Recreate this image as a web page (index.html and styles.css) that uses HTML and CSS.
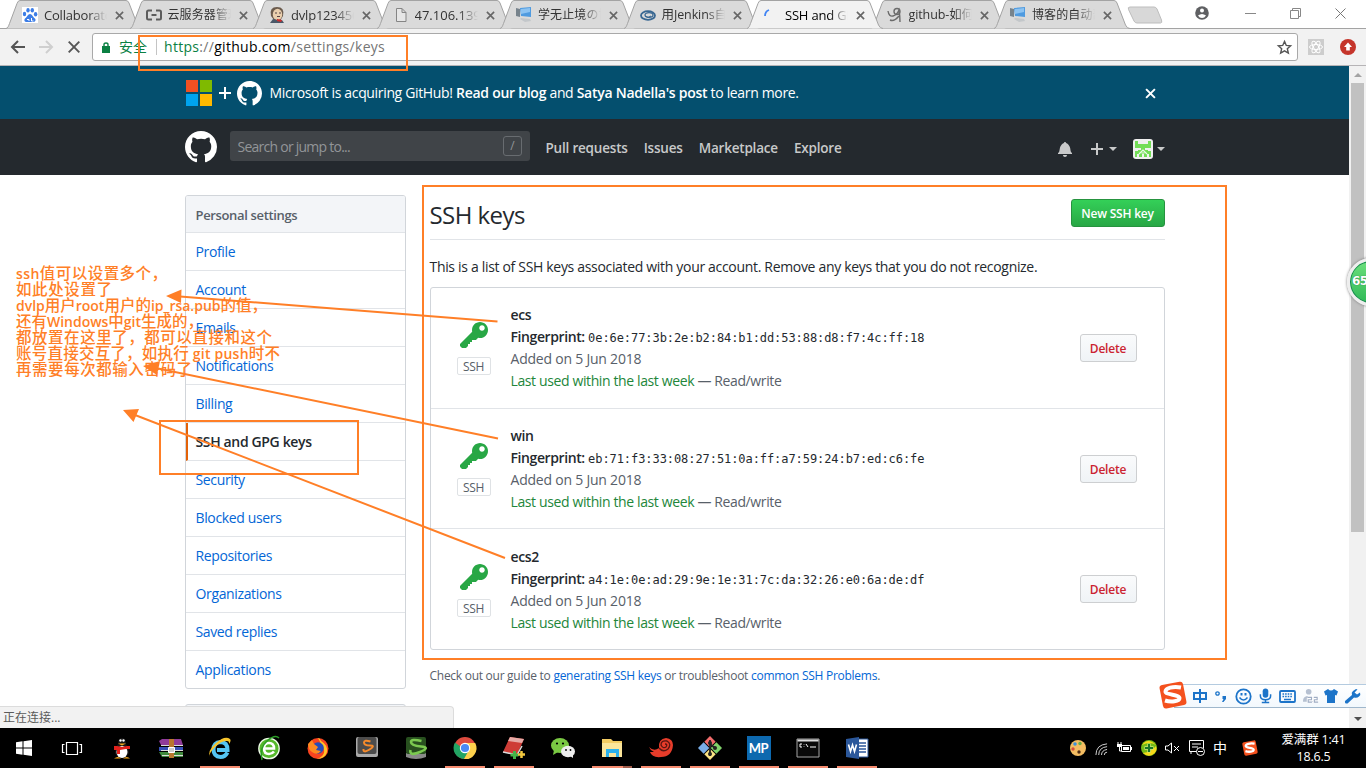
FILE: index.html
```html
<!DOCTYPE html>
<html lang="zh-CN">
<head>
<meta charset="utf-8">
<title>SSH and GPG keys</title>
<link rel="stylesheet" href="styles.css">
</head>
<body>
<svg class="defs" width="0" height="0">
  <symbol id="tab" viewBox="0 0 137 29"><path d="M0 28.500C2 28 2.500 26 3.500 23.500L11 3.500Q12 .5 14 .5H120Q122 .5 123 3L131.500 25Q133 28.500 136 28.500" stroke="#a3a3a3"/></symbol>
  <symbol id="x" viewBox="0 0 10 10"><path d="M1 1l8 8M9 1L1 9" stroke="currentColor" stroke-width="1.8" fill="none"/></symbol>
  <symbol id="mark" viewBox="0 0 16 16"><path fill="#fff" fill-rule="evenodd" d="M8 0C3.58 0 0 3.58 0 8c0 3.54 2.29 6.53 5.47 7.59.4.07.55-.17.55-.38 0-.19-.01-.82-.01-1.49-2.01.37-2.53-.49-2.69-.94-.09-.23-.48-.94-.82-1.13-.28-.15-.68-.52-.01-.53.63-.01 1.08.58 1.23.82.72 1.21 1.87.87 2.33.66.07-.52.28-.87.51-1.07-1.78-.2-3.64-.89-3.64-3.95 0-.87.31-1.59.82-2.15-.08-.2-.36-1.02.08-2.12 0 0 .67-.21 2.2.82.64-.18 1.32-.27 2-.27.68 0 1.36.09 2 .27 1.53-1.04 2.2-.82 2.2-.82.44 1.1.16 1.92.08 2.12.51.56.82 1.27.82 2.15 0 3.07-1.87 3.75-3.65 3.95.29.25.54.73.54 1.48 0 1.07-.01 1.93-.01 2.2 0 .21.15.46.55.38A8.013 8.013 0 0 0 16 8c0-4.42-3.58-8-8-8z"/></symbol>
  <symbol id="key" viewBox="0 0 14 16"><path fill="#28a745" fill-rule="evenodd" d="M12.83 2.17C12.08 1.42 11.14 1.03 10 1c-1.13.03-2.08.42-2.83 1.17S6.04 3.86 6.01 5c0 .3.03.59.09.89L0 12v1l1 1h2l1-1v-1h1v-1h1v-1h2l1.09-1.11c.3.08.59.11.91.11 1.14-.03 2.08-.42 2.83-1.17S13.97 6.14 14 5c-.03-1.14-.42-2.08-1.17-2.83zM11 5.38c-.77 0-1.38-.61-1.38-1.38 0-.77.61-1.38 1.38-1.38.77 0 1.38.61 1.38 1.38 0 .77-.61 1.38-1.38 1.38z"/></symbol>
  <symbol id="pc" viewBox="0 0 16 16"><path d="M0 1l4 1v8l-4-1z" fill="#77838c"/><path d="M4 1l11-1v10L5 9z" fill="#4f9be0"/><path d="M5 2l9-1v4L5 7z" fill="#8cc3f2"/><path d="M5 11l9 1 1 2-6 1-5-3z" fill="#c3c7ca"/></symbol>
  <symbol id="sogou" viewBox="0 0 28 28"><path d="M3 4Q0 4.500 .6 7.500L4 25q.7 3 3.500 2.500L25 24q3-.7 2.400-3.500L24 3Q23 0 20.500.8Z" fill="#f4511e"/><path d="M22 6.500C14 5 6.500 7 6.500 10.500S20.500 13.500 20.500 17 12 21.500 6 19.500" fill="none" stroke="#fff" stroke-width="4"/></symbol>
</svg>

<div class="screen">
  <header class="tabstrip">
    <div class="tab"><svg class="shape"><use href="#tab"/></svg>
      <svg class="fav" viewBox="0 0 16 16"><path fill="#fff" d="M0 0h16v16H0z"/><g fill="#3c7de6"><ellipse cx="2.500" cy="7" rx="1.700" ry="2.300"/><ellipse cx="6" cy="3.200" rx="1.700" ry="2.300"/><ellipse cx="10.300" cy="3.200" rx="1.700" ry="2.300"/><ellipse cx="13.600" cy="7.200" rx="1.700" ry="2.200"/><path d="M8 7c2 0 3 3 5 4.500 1.500 2-.5 4-2.500 3.500H5.500C3 15.500 1.500 13.500 3 11.500 5 10 6 7 8 7z"/></g><path d="M5 12.500h2v1.500M9.500 11v3h2" stroke="#fff" fill="none"/></svg>
      <span class="title">Collaborators</span><svg class="close"><use href="#x"/></svg></div>
    <div class="tab"><svg class="shape"><use href="#tab"/></svg>
      <svg class="fav" viewBox="0 0 16 16"><path d="M6 3.500H2.500Q1 3.500 1 5v6q0 1.500 1.500 1.500H6M10 3.500h3.500Q15 3.500 15 5v6q0 1.500-1.500 1.500H10M5.500 8h5" stroke="#5c5c5c" stroke-width="2" fill="none"/></svg>
      <span class="title zh">云服务器管理</span><svg class="close"><use href="#x"/></svg></div>
    <div class="tab"><svg class="shape"><use href="#tab"/></svg>
      <svg class="fav" viewBox="0 0 16 16"><path d="M2 9Q0 0 8 0t6 9l-3 5-6-1z" fill="#6b5b4d"/><ellipse cx="8.500" cy="7.500" rx="4.700" ry="5.800" fill="#eacfae"/><path d="M1 16l3-4 5 1 4 0 2 3z" fill="#4a5868"/><path d="M8 12l5 1-1 2-4-1z" fill="#d02b2b"/><path d="M6 6h2m2 0h2M8 9.500h3" stroke="#544"/></svg>
      <span class="title">dvlp12345678</span><svg class="close"><use href="#x"/></svg></div>
    <div class="tab"><svg class="shape"><use href="#tab"/></svg>
      <svg class="fav" viewBox="0 0 16 16"><path d="M3.500 1.500H9l4 4v9H3.500zM9 1.500v4h4" fill="#e6e6e6" stroke="#858585"/></svg>
      <span class="title ip">47.106.139.12</span><svg class="close"><use href="#x"/></svg></div>
    <div class="tab"><svg class="shape"><use href="#tab"/></svg><svg class="fav"><use href="#pc"/></svg>
      <span class="title zh">学无止境の博客</span><svg class="close"><use href="#x"/></svg></div>
    <div class="tab"><svg class="shape"><use href="#tab"/></svg>
      <svg class="fav" viewBox="0 0 16 16"><g fill="none" stroke="#386792"><ellipse cx="8" cy="8.500" rx="7" ry="4.300" stroke-width="1.800"/><ellipse cx="9" cy="8" rx="4" ry="2.300" stroke-width="1.300"/><path d="M5 9q3 3 6 0" /></g></svg>
      <span class="title mix">用Jenkins自动化</span><svg class="close"><use href="#x"/></svg></div>
    <div class="tab active"><svg class="shape"><use href="#tab"/></svg>
      <svg class="fav" viewBox="0 0 16 16"><path d="M2 9q0-4.500 4-6" fill="none" stroke="#4285f4" stroke-width="1.800"/></svg>
      <span class="title">SSH and GPG</span><svg class="close"><use href="#x"/></svg></div>
    <div class="tab"><svg class="shape"><use href="#tab"/></svg>
      <svg class="fav" viewBox="0 0 16 16"><g fill="none" stroke="#6b6b6b" stroke-width="1.400"><circle cx="10" cy="4.500" r="3"/><path d="M1 4q1 6 5 5 4-1 6-6 1 6 1 12M3 13q4 2 9-4"/></g></svg>
      <span class="title mix">github-如何用</span><svg class="close"><use href="#x"/></svg></div>
    <div class="tab"><svg class="shape"><use href="#tab"/></svg><svg class="fav"><use href="#pc"/></svg>
      <span class="title zh">博客的自动部署</span><svg class="close"><use href="#x"/></svg></div>
    <svg class="newtab" viewBox="0 0 36 18"><path d="M3 1h24q2 0 3 2l4.500 11q1 3-1 3H10q-2 0-3-2L1.500 3.500Q.5 1 3 1z" fill="#d8d8d8" stroke="#bdbdbd"/></svg>
    <div class="winctl">
      <svg width="14" height="14" viewBox="0 0 14 14"><circle cx="7" cy="7" r="6.800" fill="#5f6063"/><circle cx="7" cy="4.600" r="2" fill="#fff"/><path d="M3 9.500q4-3 8 0-1.500 2.500-4 2.500T3 9.500z" fill="#fff"/></svg>
      <svg width="11" height="11" viewBox="0 0 11 11"><path d="M0 5.500h11" stroke="#888"/></svg>
      <svg width="11" height="11" viewBox="0 0 11 11"><path d="M.5 2.500h8v8h-8zM2.500 2.500v-2h8v8h-2" fill="none" stroke="#888"/></svg>
      <svg width="11" height="11" viewBox="0 0 11 11"><path d="M.5.5l10 10M10.500.5l-10 10" stroke="#777"/></svg>
    </div>
  </header>

  <nav class="toolbar">
    <svg width="14" height="14" viewBox="0 0 14 14"><path d="M14 7H1.500M7 1L1 7l6 6" fill="none" stroke="#555" stroke-width="2"/></svg>
    <svg width="14" height="14" viewBox="0 0 14 14"><path d="M0 7h12.500M7 1l6 6-6 6" fill="none" stroke="#cfcfcf" stroke-width="2"/></svg>
    <svg width="12" height="12" viewBox="0 0 12 12"><path d="M.7.7l10.600 10.600M11.300.7L.7 11.300" fill="none" stroke="#555" stroke-width="1.900"/></svg>
    <div class="address">
      <svg width="8" height="11" viewBox="0 0 8 11"><path d="M0 4h8v7H0z" fill="#0b8043"/><path d="M2 5V2.500Q2 1 4 1t2 1.500V5" fill="none" stroke="#0b8043" stroke-width="1.400"/></svg>
      <span class="secure">安全</span><i class="sep"></i>
      <span class="url"><b>https</b>://<em>github.com</em>/settings/keys</span>
      <svg class="star" width="15" height="15" viewBox="0 0 16 16"><path d="M8 1.500l1.900 4.300 4.600.4-3.500 3.100 1.100 4.600L8 11.500l-4.100 2.400L5 9.300 1.500 6.200l4.600-.4z" fill="none" stroke="#555" stroke-width="1.500"/></svg>
    </div>
    <svg class="ext" width="16" height="16" viewBox="0 0 16 16"><path fill="#cdcdcd" d="M0 0h16v16H0z"/><g fill="none" stroke="#fff"><ellipse cx="8" cy="8" rx="6.500" ry="2.500"/><ellipse cx="8" cy="8" rx="6.500" ry="2.500" transform="rotate(60 8 8)"/><ellipse cx="8" cy="8" rx="6.500" ry="2.500" transform="rotate(120 8 8)"/></g></svg>
    <svg class="ext2" width="16" height="16" viewBox="0 0 16 16"><circle cx="8" cy="8" r="8" fill="#c5352b"/><path d="M8 3.500L12 8H9.800v3.500H6.200V8H4z" fill="#fff"/></svg>
  </nav>

  <div class="viewport">
    <div class="page">
      <div class="banner"><div class="wrap">
        <svg width="26" height="26" viewBox="0 0 26 26"><path fill="#f25022" d="M0 0h12v12H0z"/><path fill="#7fba00" d="M14 0h12v12H14z"/><path fill="#00a4ef" d="M0 14h12v12H0z"/><path fill="#ffb900" d="M14 14h12v12H14z"/></svg>
        <svg class="plus" width="12" height="12" viewBox="0 0 12 12"><path d="M6 0v12M0 6h12" stroke="#fff" stroke-width="2"/></svg>
        <svg width="25" height="25"><use href="#mark"/></svg>
        <p>Microsoft is acquiring GitHub! <b>Read our blog</b> and <b>Satya Nadella's post</b> to learn more.</p>
        <svg class="dismiss" width="11" height="11"><use href="#x"/></svg>
      </div></div>
      <div class="ghheader"><div class="wrap">
        <svg width="32" height="32"><use href="#mark"/></svg>
        <div class="search"><span>Search or jump to...</span><kbd>/</kbd></div>
        <a>Pull requests</a><a>Issues</a><a>Marketplace</a><a>Explore</a>
        <div class="user">
          <svg width="14" height="16" viewBox="0 0 14 16"><path fill="#c8c9ca" d="M14 12v1H0v-1l.73-.58c.77-.77.81-2.55 1.19-4.42C2.69 3.23 6 2 6 2c0-.55.45-1 1-1s1 .45 1 1c0 0 3.39 1.230 4.160 5 .38 1.880.42 3.660 1.190 4.420l.66.58H14zm-7 4c1.110 0 2-.89 2-2H5c0 1.110.89 2 2 2z"/></svg>
          <svg class="add" width="12" height="12" viewBox="0 0 12 12"><path d="M6 0v12M0 6h12" stroke="#c8c9ca" stroke-width="2"/></svg><i class="caret"></i>
          <svg class="avatar" width="20" height="20" viewBox="0 0 20 20"><rect width="20" height="20" rx="3" fill="#f0f0f0"/><path fill="#73dd57" d="M2 2h3v3h10V2h3v7h-6v2h3v1h3v6h-2v-3h-2v3h-3v-3h-2v3H6v-3H4v3H2v-6h3v-1h3V9H2z"/><path d="M6 15l4-4 4 4M8.500 14l3 0" stroke="#eafae6" stroke-width="1.200" fill="none"/></svg><i class="caret"></i>
        </div>
      </div></div>

      <div class="wrap content">
        <aside>
          <div class="menu">
            <h3>Personal settings</h3>
            <a>Profile</a><a>Account</a><a>Emails</a><a>Notifications</a><a>Billing</a><a class="selected">SSH and GPG keys</a><a>Security</a><a>Blocked users</a><a>Repositories</a><a>Organizations</a><a>Saved replies</a><a>Applications</a>
          </div>
          <div class="menu next"></div>
        </aside>
        <main>
          <div class="subhead"><h2>SSH keys</h2><button class="new">New SSH key</button></div>
          <p class="intro">This is a list of SSH keys associated with your account. Remove any keys that you do not recognize.</p>
          <ul class="keys">
            <li><div class="kicon"><svg width="28" height="32"><use href="#key"/></svg><span>SSH</span></div>
              <div class="info"><b>ecs</b><p><b>Fingerprint:</b> <code>0e:6e:77:3b:2e:b2:84:b1:dd:53:88:d8:f7:4c:ff:18</code></p><p class="gray">Added on 5 Jun 2018</p><p class="gray"><em>Last used within the last week</em> — Read/write</p></div><button class="del">Delete</button></li>
            <li><div class="kicon"><svg width="28" height="32"><use href="#key"/></svg><span>SSH</span></div>
              <div class="info"><b>win</b><p><b>Fingerprint:</b> <code>eb:71:f3:33:08:27:51:0a:ff:a7:59:24:b7:ed:c6:fe</code></p><p class="gray">Added on 5 Jun 2018</p><p class="gray"><em>Last used within the last week</em> — Read/write</p></div><button class="del">Delete</button></li>
            <li><div class="kicon"><svg width="28" height="32"><use href="#key"/></svg><span>SSH</span></div>
              <div class="info"><b>ecs2</b><p><b>Fingerprint:</b> <code>a4:1e:0e:ad:29:9e:1e:31:7c:da:32:26:e0:6a:de:df</code></p><p class="gray">Added on 5 Jun 2018</p><p class="gray"><em>Last used within the last week</em> — Read/write</p></div><button class="del">Delete</button></li>
          </ul>
          <p class="guide">Check out our guide to <a>generating SSH keys</a> or troubleshoot <a>common SSH Problems</a>.</p>
        </main>
      </div>
    </div>
    <div class="scrollbar"><i class="up"></i><div class="thumb"></div><i class="down"></i></div>
  </div>

  <footer class="taskbar">
    <div class="app first"><svg viewBox="0 0 24 24"><path fill="#fff" d="M4 6.300l6.500-1v6.200H4zm7.500-1.100L20 4v7.500h-8.500zM4 12.500h6.500v6.200L4 17.700zm7.500 0H20V20l-8.500-1.200z"/></svg></div>
    <div class="app second"><svg viewBox="0 0 24 24"><path d="M6.500 6.500h11v12h-11zM4.500 8.500h-2v8h2M19.500 8.500h2v8h-2" fill="none" stroke="#fff" stroke-width="1.200"/></svg></div>
    <div class="app"><svg viewBox="0 0 24 24"><path d="M8 8q0-6 4-6t4 6q3 4 3 9-2 5-7 5t-7-5q0-5 3-9z" fill="#161616"/><ellipse cx="12" cy="16" rx="5.500" ry="6" fill="#fff"/><circle cx="10.500" cy="4.500" r="1.200" fill="#fff"/><circle cx="13.500" cy="4.500" r="1.200" fill="#fff"/><path d="M4 10h3l5 1 5-1h3v3l-4 0-6 1v4H7v-4H4z" fill="#e3211c"/><path d="M8 7.500h8l-4 2zM4 22.500q4-3 7 0zM13 22.500q4-3 7 0z" fill="#f6a81a"/></svg></div>
    <div class="app"><svg viewBox="0 0 24 24"><path fill="#8f3b99" d="M0 5l3-2h19l2 6H2z"/><path fill="#3650b8" d="M0 11h24v4H0z"/><path fill="#3f8a3c" d="M0 16h24v5H3z"/><path d="M2 9.500h22M2 14.500h22M3 19.500h21" stroke="#ddd"/><path fill="#b9772f" d="M10 3h5v19h-5z"/><path d="M9.500 11.500h6v5h-6z" fill="#ccc" stroke="#fff"/></svg></div>
    <div class="app open"><svg viewBox="0 0 24 24"><path d="M19.500 16.500q-2.500 4.500-7 4.500-7-.5-7-7.500T12.500 6q7 0 7 8H9" fill="none" stroke="#55c5f3" stroke-width="4"/><path d="M2 21Q-1 15 8 7T22 3q1.500 1.500-1 5 .5-3-2-3Q14 4 7 11T2 21z" fill="#f8c52c"/></svg></div>
    <div class="app"><svg viewBox="0 0 24 24"><circle cx="12" cy="12.500" r="10.200" fill="#56b82c" stroke="#eefbe8" stroke-width="1.300"/><path d="M17 15.500q-2 2.500-5 2.500-5 0-5-5.500T12 7q5 0 5 5.500H8" fill="none" stroke="#fff" stroke-width="2.600"/><path d="M5 24Q2 12 10 5t12-3" stroke="#2a9d25" fill="none" stroke-width="1.500"/></svg></div>
    <div class="app"><svg viewBox="0 0 24 24"><circle cx="12" cy="12.500" r="10.500" fill="#f8431f"/><path d="M12 2q2 0 3 3 7 4 6 11-2 7-10 7 10-4 6-12-3-5-5-9z" fill="#ffc527"/><circle cx="12" cy="12" r="5.800" fill="#274cb8"/><path d="M2 8l4-4 2 4 4 3-2 3 5 1q-4 5-9 1-4-3-4-8z" fill="#ff8a1f"/></svg></div>
    <div class="app"><svg viewBox="0 0 24 24"><rect x="1" y="1" width="22" height="20" rx="2" fill="#aaa"/><rect x="2.500" y="1" width="19" height="17" rx="2" fill="#4c4c4c"/><path d="M15.500 5.500Q9 3.500 9 6.500t6 3-.5 4-6-.5" fill="none" stroke="#f78b2b" stroke-width="2"/></svg></div>
    <div class="app"><svg viewBox="0 0 24 24"><path d="M2 17h20v4q-10 4-20 0z" fill="#898989"/><rect x="2" y="1" width="20" height="17" rx="2" fill="#28501f"/><path d="M17.500 5Q7 2.500 7 6t10 4.500-1 5.500-9.500-2" fill="none" stroke="#7bc950" stroke-width="2.600"/></svg></div>
    <div class="app open"><svg viewBox="0 0 24 24"><circle cx="12" cy="12" r="11" fill="#de4b3f"/><path d="M12 12l-4-1-6-4.500A11 11 0 0 0 11 23l5-8z" fill="#22a463"/><path d="M12 7h10.200A11 11 0 0 1 11 23l5-9z" fill="#fdd14c"/><circle cx="12" cy="12" r="5.200" fill="#fff"/><circle cx="12" cy="12" r="4.100" fill="#4a8af4"/></svg></div>
    <div class="app open"><svg viewBox="0 0 24 24"><path d="M8 1l14 2-7 16-14-3z" fill="#ce3c36"/><path d="M8 1l14 2-2 4L6 5z" fill="#e6aaa6"/><path d="M1 16l14 3 5-9" stroke="#ddd" fill="none" stroke-width="1.500"/><path d="M8.500 19h8M12.500 15v8" stroke="#43b549" stroke-width="3"/><path d="M16 18.500h7M19.500 15v7" stroke="#f3c940" stroke-width="2.500"/></svg></div>
    <div class="app"><svg viewBox="0 0 24 24"><ellipse cx="9" cy="9.500" rx="9" ry="7.500" fill="#7ac943"/><path d="M3 14l-1 5 5-3z" fill="#7ac943"/><ellipse cx="17" cy="15.500" rx="7" ry="5.800" fill="#eee"/><path d="M19 20l3 2v-4z" fill="#eee"/><circle cx="6" cy="7.500" r="1.100"/><circle cx="12" cy="7.500" r="1.100"/><circle cx="15" cy="14" r=".9"/><circle cx="19.500" cy="14" r=".9"/></svg></div>
    <div class="app open folder"><svg viewBox="0 0 24 24"><path d="M2 3h9l2 2h9v16H2z" fill="#f3cc63"/><path d="M2 7h20v14H2z" fill="#fbe59a"/><path d="M6 13h13v8h-3v-4H9v4H6z" fill="#2cb1ec"/></svg></div>
    <div class="app open"><svg viewBox="0 0 24 24"><path d="M0 11q5 5 10 1-1-9 7-10 7 1 7 7-1 12-12 12Q3 22 1 16l4 0Q1 14 0 11z" fill="#e63c2a"/><path d="M10 12q4 5 9 1 4-5-1-8-6-1-6 4 2 4 5 2 2-3-1-3" fill="none" stroke="#551612" stroke-width="1.300"/></svg></div>
    <div class="app open"><svg viewBox="0 0 24 24"><g transform="rotate(45 12 12)"><path d="M3.500 3.500h8v8h-8z" fill="#f26c6c"/><path d="M12.500 3.500h8v8h-8z" fill="#80d36b"/><path d="M3.500 12.500h8v8h-8z" fill="#79aee8"/><path d="M12.500 12.500h8v8h-8z" fill="#fbe384"/></g><path d="M12 4v16M12 8l5 4" stroke="#222" stroke-width="1.800"/><g fill="#222"><circle cx="12" cy="7" r="2"/><circle cx="12" cy="18" r="2"/><circle cx="17" cy="12" r="2"/></g></svg></div>
    <div class="app open"><div class="mp">MP</div></div>
    <div class="app open"><svg viewBox="0 0 24 24"><path d="M1 3h22v18H1z" fill="#090909" stroke="#a5a5a5"/><path d="M1.500 4.500h21" stroke="#ddd" stroke-width="2"/><path d="M6 8H4v3h2M8 8v.5M8 10.500v.5M10 8l2 3M14 11h6" stroke="#fff" fill="none"/></svg></div>
    <div class="app open"><svg viewBox="0 0 24 24"><path d="M12 3h11v18H12z" fill="#fff" stroke="#2b579a"/><path d="M14 7h7M14 10h7M14 13h7M14 16h7" stroke="#2b579a" stroke-width="1.300"/><path d="M1 3l13-2v22L1 21z" fill="#2b579a"/><path d="M3.500 8.500l2 7L7.500 9l2 6.500 2-7" fill="none" stroke="#fff" stroke-width="1.600"/></svg></div>
    <div class="tray">
      <svg width="16" height="16" viewBox="0 0 16 16"><circle cx="8" cy="8" r="8" fill="#f4bd62"/><circle cx="5" cy="4" r="1.800" fill="#3d90d8"/><circle cx="10" cy="3.500" r="1.700" fill="#67ad46"/><circle cx="3" cy="9" r="1.700" fill="#d94c3a"/><circle cx="9" cy="12" r="1.700" fill="#4d2a12"/></svg>
      <svg width="13" height="13" viewBox="0 0 14 14"><g fill="none" stroke="#ddd"><path d="M1 14Q1 3 13 2M4 14q0-8 9-9M7 14q0-5 6-6M10 14q0-3 3-3"/></g></svg>
      <svg width="16" height="14" viewBox="0 0 16 14"><path d="M5.500 4.500h9v6h-9z" fill="none" stroke="#fff"/><path d="M7 6h6v3H7zM15 6h1v3h-1zM1 3h5v3H1z" fill="#fff"/><path d="M2 1v3M5 1v3M3.500 6v4h2" fill="none" stroke="#fff"/></svg>
      <svg width="16" height="16" viewBox="0 0 16 16"><circle cx="8" cy="8" r="8" fill="#72ba16"/><path d="M1 5q6-8 14 0Q9 1 1 5zM2 13q8-1 13-7 2 6-4 9-5 2-9-2z" fill="#f7d91a"/><path d="M8 3.500v9M3.500 8h9" stroke="#cdea7d" stroke-width="3.500"/><path d="M8 4v8M4 8h8" stroke="#187527" stroke-width="2.200"/></svg>
      <svg width="15" height="12" viewBox="0 0 15 12"><path d="M.5 4v4H3l3.500 3V1L3 4zM9 4l5 5M14 4L9 9" fill="none" stroke="#fff"/></svg>
      <svg width="16" height="16" viewBox="0 0 16 16"><path d="M8 11.500H.5V.5h14V8M3 4h9M3 7h6M2 11v3" fill="none" stroke="#fff"/><circle cx="11.500" cy="11.500" r="4" fill="#000" stroke="#fff"/><path d="M9 11.500h5" stroke="#fff"/></svg>
      <span class="ime">中</span>
      <svg class="sg" width="16" height="16"><use href="#sogou"/></svg>
      <div class="clock"><span>爱满群 1:41</span><span>18.6.5</span></div>
    </div>
  </footer>

  <div class="status">正在连接...</div>
  <div class="ball">65</div>
  <div class="imebar">
    <svg class="logo" width="28" height="28"><use href="#sogou"/></svg>
    <svg width="14" height="14" viewBox="0 0 14 14"><path d="M1 4h12v6H1zM7 0v14" fill="none" stroke="#1c74c9" stroke-width="2"/></svg>
    <svg width="14" height="14" viewBox="0 0 14 14"><circle cx="3.500" cy="4.500" r="1.700" fill="none" stroke="#1c74c9" stroke-width="1.300"/><path d="M8.500 7h3.500v3l-2.500 3H8l1.500-3h-1z" fill="#1c74c9"/></svg>
    <svg width="17" height="17" viewBox="0 0 17 17"><circle cx="8.500" cy="8.500" r="7.200" fill="none" stroke="#1c74c9" stroke-width="1.800"/><path d="M4.500 9.500q4 5 8 0" fill="none" stroke="#1c74c9" stroke-width="1.500"/><path d="M5.500 5h2v2.500h-2zM9.500 5h2v2.500h-2z" fill="#1c74c9"/></svg>
    <svg width="13" height="16" viewBox="0 0 14 16"><rect x="4" width="6" height="10" rx="3" fill="#1c74c9"/><path d="M1.500 6v2q0 4 5.500 4t5.500-4V6M7 12v3M3 15h8" fill="none" stroke="#1c74c9" stroke-width="1.600"/></svg>
    <svg width="17" height="13" viewBox="0 0 17 13"><rect x="1" y="1" width="15" height="11" rx="1" fill="none" stroke="#1c74c9" stroke-width="1.800"/><path d="M3.500 4h10M3.500 6.500h10" stroke="#1c74c9" stroke-width="1.500" stroke-dasharray="1.600 1"/><path d="M5 9.500h7" stroke="#1c74c9" stroke-width="1.500"/></svg>
    <svg width="17" height="16" viewBox="0 0 18 16"><circle cx="6" cy="3.500" r="3" fill="#b5c0d1"/><path d="M0 13q0-5 6-5 4 0 5 2v4H0z" fill="#b5c0d1"/><path d="M5 9.500h4v2.500H5.500v2h4M11.500 9.500H15v2.500h-3v2h4" fill="none" stroke="#fff" stroke-width="3"/><path d="M5 9.500h4v2.500H5.500v2.500H9.500M11.500 9.500H15v2.500h-3v2.500h4" fill="none" stroke="#9dacc3" stroke-width="1.200"/></svg>
    <svg class="shirt" width="14" height="14" viewBox="0 0 14 14"><path d="M4 0q3 3 6 0l4 2.500-1.500 4L11 6v8H3V6l-1.500.5L0 2.500z" fill="#1c74c9"/></svg>
    <svg width="15" height="15" viewBox="0 0 15 15"><path d="M11 0L8 2q-2 1.500-1 4L0 12q-.5 3 2.500 2.500L9 8.500q3 1 5-1T15 3.500l-3 2-2.500-2 3-3z" fill="#1c74c9"/></svg>
  </div>

  <svg class="notes" viewBox="0 0 1366 768">
    <g fill="none" stroke="#ff7f27" stroke-width="2"><path d="M139 36h268v34H139zM160 421h198v53H160zM423 186h803v473H423z"/><path d="M497.500 321.500L180 296.500M498 438.500L158 368.500M505 558L135 415"/></g>
    <g fill="#ff7f27"><path d="M166 296l15.500-6.500-.5 13.500zM143 366l17-5-3 14zM123 410l16-1-5.500 13z"/></g>
    <g class="ink">
      <text x="16" y="279" textLength="151"><tspan>ssh</tspan>值可以设置多个，</text>
      <text x="16" y="295" textLength="96">如此处设置了</text>
      <text x="16" y="311" textLength="251"><tspan>dvlp</tspan>用户<tspan>root</tspan>用户的<tspan>ip_rsa.pub</tspan>的值，</text>
      <text x="16" y="327" textLength="187">还有<tspan>Windows</tspan>中<tspan>git</tspan>生成的，</text>
      <text x="16" y="343" textLength="256">都放置在这里了，都可以直接和这个</text>
      <text x="16" y="359" textLength="264">账号直接交互了，如执行<tspan> git push</tspan>时不</text>
      <text x="16" y="375" textLength="176">再需要每次都输入密码了</text>
    </g>
  </svg>
</div>
</body>
</html>
```
FILE: styles.css
```css
* { box-sizing: border-box; }
body { margin: 0; font-family: "Open Sans", "Noto Sans CJK SC", sans-serif; font-size: 14px; letter-spacing: -.32px; color: #24292e; }
svg { display: block; flex: none; overflow: visible; }
p, h2, h3, ul { margin: 0; padding: 0; }
em { font-style: normal; }
b { font-weight: 600; }
.defs { position: absolute; }
.screen { position: relative; width: 1366px; height: 768px; overflow: hidden; display: flex; flex-direction: column; background: #fff; }

/* browser tabs */
.tabstrip { height: 28px; flex: none; display: flex; padding-left: 6px; background: #fff; }
.tab { position: relative; width: 137px; margin-right: -13.500px; height: 29px; flex: none; display: flex; align-items: center; padding: 1px 0 0 16px; color: #333; }
.tab .shape { position: absolute; left: 0; top: 0; width: 137px; height: 29px; fill: #dadada; }
.tab.active { z-index: 2; color: #000; }
.tab.active .shape { fill: #f2f2f2; }
.fav { position: relative; width: 16px; height: 16px; }
.title { position: relative; width: 63px; margin-left: 6px; overflow: hidden; white-space: nowrap; letter-spacing: -.2px; font-size: 13px; line-height: 18px; mask-image: linear-gradient(to right, #000 70%, transparent); }
.title.zh { font-size: 12px; letter-spacing: .1px; }
.title.mix { font-size: 12.500px; letter-spacing: -.1px; }
.title.ip { letter-spacing: 0; }
.close { position: relative; width: 9px; height: 9px; margin-left: 8px; color: #666; }
.newtab { width: 36px; height: 18px; margin: 6px 0 0 9px; }
.winctl { margin-left: auto; display: flex; align-items: center; gap: 34px; padding: 0 20px 2px 0; }
.winctl svg:first-child { margin-right: 2px; }

/* address bar */
.toolbar { height: 38px; flex: none; display: flex; align-items: center; padding: 0 10px 0 11px; background: #f2f2f2; border-top: 1px solid #a3a3a3; border-bottom: 1px solid #b6b4b6; }
.toolbar > svg:nth-child(2) { margin-left: 14px; }
.toolbar > svg:nth-child(3) { margin-left: 15px; }
.address { width: 1206px; height: 28px; margin-left: 12px; padding: 0 5px 0 9px; display: flex; align-items: center; background: #fff; border: 1px solid #a9a9a9; border-radius: 3px; }
.secure { margin: -2px 0 0 9px; color: #0b8043; letter-spacing: 0; font-size: 14px; }
.sep { width: 1px; height: 16px; margin: 0 7px 0 9px; background: #c4c4c4; }
.url { color: #757575; letter-spacing: .3px; margin-top: -2px; }
.url b { font-weight: 400; color: #0b8043; }
.url em { color: #000; }
.star { margin-left: auto; }
.ext { margin-left: 10px; }
.ext2 { margin-left: 16px; }

.viewport { height: 662px; flex: none; display: flex; overflow: hidden; }
.page { width: 1349px; }
.wrap { width: 980px; margin: 0 auto; display: flex; align-items: center; }
.banner { background: #044f6e; color: #fff; height: 53px; }
.banner .wrap { height: 53px; padding: 1px 9px 0 1px; }
.banner .plus { margin: 0 6px 0 7px; }
.banner p { margin: -1px 0 0 8px; letter-spacing: -.34px; }
.banner b { letter-spacing: -.26px; }
.banner p, .intro { white-space: nowrap; }
.dismiss { margin-left: auto; }
.ghheader { background: #24292e; height: 56px; }
.ghheader .wrap { height: 56px; }
.search { width: 300px; height: 30px; margin: 0 0 2px 13px; padding: 0 8px; display: flex; justify-content: space-between; align-items: center; background: #404448; border-radius: 3px; color: #929598; letter-spacing: -.75px; }
.search span { letter-spacing: -.75px; }
kbd { width: 19px; height: 20px; border: 1px solid #686c70; border-radius: 3px; font: 12px/17px "Open Sans", sans-serif; text-align: center; }
.ghheader a { font-weight: 600; font-size: 13.500px; color: #c8c9ca; margin-left: 16px; padding-top: 1px; letter-spacing: -.2px; white-space: nowrap; }
.user { margin-left: auto; padding: 4px 0 0; display: flex; align-items: center; }
.add { margin-left: 19px; }
.caret { width: 8px; border: 4px solid transparent; border-top-color: #c8c9ca; border-bottom: 0; margin-left: 6px; }
.user .caret:last-child { margin-left: 4px; }
.avatar { margin-left: 16px; }

.content { align-items: flex-start; justify-content: space-between; padding-top: 20px; }
aside { width: 221px; }
.menu { border: 1px solid #d1d5da; border-radius: 3px; overflow: hidden; }
.menu h3 { height: 37px; line-height: 38px; padding-left: 10px; background: #f3f5f8; color: #586069; font-size: 13px; font-weight: 600; border-bottom: 1px solid #e1e4e8; letter-spacing: -.35px; }
.menu a { display: block; height: 38px; line-height: 38px; padding-left: 10px; color: #0366d6; border-bottom: 1px solid #e1e4e8; letter-spacing: -.36px; }
.menu a:last-child { border-bottom: 0; height: 37px; }
.menu .selected { border-left: 2px solid #e36209; padding-left: 8px; color: #24292e; font-weight: 600; letter-spacing: -.36px; }
.menu.next { height: 40px; margin-top: 15px; background: #f3f5f8; }
main { width: 735px; }
.subhead { height: 45px; display: flex; justify-content: space-between; padding-top: 4px; border-bottom: 1px solid #e1e4e8; }
h2 { font-size: 24px; line-height: 31px; font-weight: 400; letter-spacing: -.55px; }
button { padding: 2px 0 0; font: 600 12px/24px "Open Sans", sans-serif; letter-spacing: -.2px; border-radius: 3px; height: 28px; }
.new { width: 94px; color: #fff; border: 1px solid #26933f; background: linear-gradient(#34d058, #28a745); }
.intro { margin-top: 16px; line-height: 21px; }
.keys { list-style: none; margin-top: 10px; height: 363px; display: flex; flex-direction: column; border: 1px solid #d1d5da; border-radius: 3px; }
.keys li { flex: 1; display: flex; align-items: center; padding: 0 27px 0 26px; border-bottom: 1px solid #e1e4e8; }
.keys li:last-child { border-bottom: 0; }
.kicon { width: 34px; display: flex; flex-direction: column; align-items: center; }
.kicon span { margin-top: 5px; width: 34px; height: 18px; border: 1px solid #dfe2e5; border-radius: 2px; color: #586069; font-size: 12px; line-height: 17px; text-align: center; }
.info { margin-left: 20px; line-height: 22px; padding-top: 1px; }
.info b { letter-spacing: -.4px; }
.info .gray { color: #586069; letter-spacing: -.38px; }
.info .gray:nth-child(3) { letter-spacing: -.22px; }
.info em { color: #22863a; }
code { font: 12px/1 "DejaVu Sans Mono", monospace; letter-spacing: -.07px; }
.del { width: 57px; margin-left: auto; color: #cb2431; border: 1px solid #cdcfd1; background: linear-gradient(#fafbfc, #eff3f6); }
.guide { margin-top: 17px; font-size: 12px; line-height: 18px; color: #586069; letter-spacing: -.27px; }
.guide a { color: #0366d6; }

.scrollbar { width: 17px; background: #f1f1f1; display: flex; flex-direction: column; align-items: center; }
.scrollbar i { border: 4px solid transparent; }
.scrollbar .up { border-top: 0; border-bottom-color: #a3a3a3; margin: 7px 0 6px; }
.scrollbar .down { border-bottom: 0; border-top-color: #505050; margin: auto 0 7px; }
.thumb { width: 13px; height: 449px; background: #c1c1c1; }

/* desktop taskbar */
.taskbar { height: 40px; flex: none; display: flex; background: #000; color: #fff; }
.app { width: 49px; height: 40px; display: flex; justify-content: center; align-items: center; flex: none; }
.app.first { width: 48px; }
.app.second { padding-right: 1px; }
.app svg { width: 24px; height: 24px; }
.app.open { background: linear-gradient(#f78c70, #f78c70) center bottom / 40px 2px no-repeat; }
.app.folder { background: linear-gradient(to right, #f78c70 31px, #a05c4b 31px) center bottom / 40px 2px no-repeat; }
.mp { width: 24px; height: 24px; background: #0d69af; font: 700 13px/24px Lato, sans-serif; text-align: center; }
.tray { margin-left: auto; display: flex; align-items: center; gap: 8.500px; }
.ime { font-size: 14px; line-height: 20px; letter-spacing: 0; }
.sg { margin-left: 6px; }
.clock { width: 73px; margin: 0 16px 0 11px; display: flex; flex-direction: column; align-items: center; font-size: 12.500px; line-height: 17px; letter-spacing: -.2px; white-space: nowrap; }

/* floating widgets */
.status { position: absolute; left: -1px; top: 706px; width: 455px; height: 23px; border: 1px solid #dcdcdc; border-bottom: 0; border-radius: 0 4px 0 0; background: #f2f2f2; color: #5a5a5a; font-size: 12px; line-height: 22px; padding-left: 3px; letter-spacing: 0; clip-path: inset(0 0 1px 0); }
.ball { position: absolute; left: 1347px; top: 258px; width: 48px; height: 48px; border-radius: 50%; border: 3px solid #eee; background: linear-gradient(#6de07c, #2fb957); box-shadow: inset 0 0 0 1px #178550, 0 0 3px #777; color: #fff; font: 700 12px/41px "DejaVu Sans", sans-serif; padding-left: 2px; letter-spacing: -.5px; text-shadow: 0 0 1px #145c30; }
.imebar { position: absolute; left: 1160px; top: 684px; width: 206px; height: 24px; display: flex; align-items: center; gap: 7px; background: linear-gradient(#b4cbe0, #b4cbe0) 14px 0 / 192px 1px no-repeat, linear-gradient(#9fb7cc, #9fb7cc) 14px 100% / 192px 1px no-repeat, linear-gradient(#fff, #f2f8fd) 14px 0 / 192px 24px no-repeat; }
.imebar .logo { margin: -3px -1px 0 -1px; }
.imebar .shirt { margin-left: -3px; }
.notes { position: absolute; left: 0; top: 0; width: 1366px; height: 768px; z-index: 5; }
.ink { fill: #ff7f27; font: 500 15.500px "Noto Sans CJK SC", sans-serif; letter-spacing: 0; }
.ink tspan { font: 600 14px "Open Sans", sans-serif; }
```
